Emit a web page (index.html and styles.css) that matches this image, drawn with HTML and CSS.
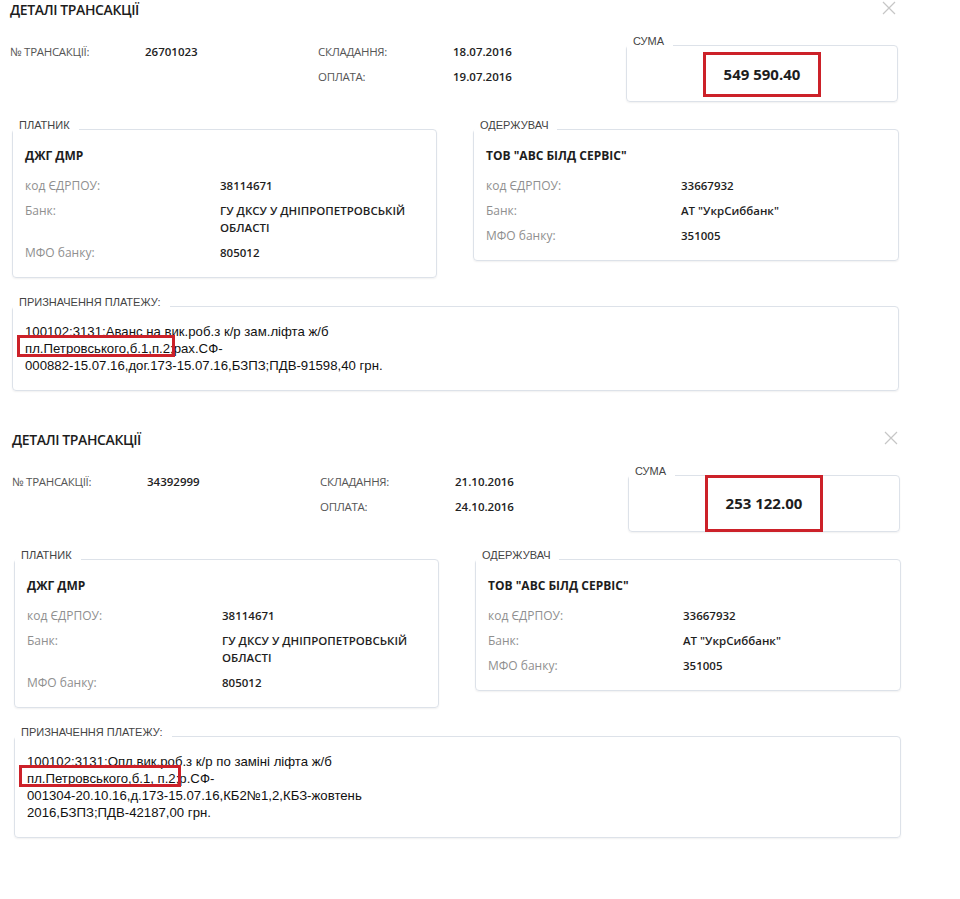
FILE: index.html
```html
<html>
<head>
    <title>Деталі трансакції</title>
    <meta charset="utf-8">
    <link rel="stylesheet" href="styles.css">
</head>
<body>

<div class="trx">
    <div class="trx-head">
        <h2 class="trx-title">ДЕТАЛІ ТРАНСАКЦІЇ</h2>
        <span class="trx-close"><svg width="14" height="14" viewBox="0 0 14 14"><path d="M1 1L13 13M13 1L1 13" stroke="#c6c6c6" stroke-width="1.2" fill="none"/></svg></span>
    </div>
    <div class="trx-top">
        <div class="trx-info">
            <span class="info-label">№ ТРАНСАКЦІЇ:</span>
            <span class="info-value">26701023</span>
            <span class="info-label">СКЛАДАННЯ:</span>
            <span class="info-value">18.07.2016</span>
            <span class="info-label info-skip">ОПЛАТА:</span>
            <span class="info-value">19.07.2016</span>
        </div>
        <fieldset class="box box-sum">
            <legend>СУМА</legend>
            <div class="sum-body"><span class="amount-mark">549 590.40</span></div>
        </fieldset>
    </div>
    <div class="trx-parties">
        <fieldset class="box">
            <legend>ПЛАТНИК</legend>
            <div class="party">
                <div class="party-name">ДЖГ ДМР</div>
                <div class="party-row"><span class="party-label">код ЄДРПОУ:</span><span class="party-value">38114671</span></div>
                <div class="party-row"><span class="party-label">Банк:</span><span class="party-value">ГУ ДКСУ У ДНІПРОПЕТРОВСЬКІЙ ОБЛАСТІ</span></div>
                <div class="party-row"><span class="party-label">МФО банку:</span><span class="party-value">805012</span></div>
            </div>
        </fieldset>
        <fieldset class="box">
            <legend>ОДЕРЖУВАЧ</legend>
            <div class="party">
                <div class="party-name">ТОВ "АВС БІЛД СЕРВІС"</div>
                <div class="party-row"><span class="party-label">код ЄДРПОУ:</span><span class="party-value">33667932</span></div>
                <div class="party-row"><span class="party-label">Банк:</span><span class="party-value">АТ "УкрСиббанк"</span></div>
                <div class="party-row"><span class="party-label">МФО банку:</span><span class="party-value">351005</span></div>
            </div>
        </fieldset>
    </div>
    <fieldset class="box box-purpose">
        <legend>ПРИЗНАЧЕННЯ ПЛАТЕЖУ:</legend>
        <div class="purpose">100102;3131;Аванс на вик.роб.з к/р зам.ліфта ж/б<br><span class="text-mark">пл.Петровського,б.1,п.2</span>;рах.СФ-<br>000882-15.07.16,дог.173-15.07.16,БЗПЗ;ПДВ-91598,40 грн.</div>
    </fieldset>
</div>

<div class="trx">
    <div class="trx-head">
        <h2 class="trx-title">ДЕТАЛІ ТРАНСАКЦІЇ</h2>
        <span class="trx-close"><svg width="14" height="14" viewBox="0 0 14 14"><path d="M1 1L13 13M13 1L1 13" stroke="#c6c6c6" stroke-width="1.2" fill="none"/></svg></span>
    </div>
    <div class="trx-top">
        <div class="trx-info">
            <span class="info-label">№ ТРАНСАКЦІЇ:</span>
            <span class="info-value">34392999</span>
            <span class="info-label">СКЛАДАННЯ:</span>
            <span class="info-value">21.10.2016</span>
            <span class="info-label info-skip">ОПЛАТА:</span>
            <span class="info-value">24.10.2016</span>
        </div>
        <fieldset class="box box-sum">
            <legend>СУМА</legend>
            <div class="sum-body"><span class="amount-mark amount-mark-tall">253 122.00</span></div>
        </fieldset>
    </div>
    <div class="trx-parties">
        <fieldset class="box">
            <legend>ПЛАТНИК</legend>
            <div class="party">
                <div class="party-name">ДЖГ ДМР</div>
                <div class="party-row"><span class="party-label">код ЄДРПОУ:</span><span class="party-value">38114671</span></div>
                <div class="party-row"><span class="party-label">Банк:</span><span class="party-value">ГУ ДКСУ У ДНІПРОПЕТРОВСЬКІЙ ОБЛАСТІ</span></div>
                <div class="party-row"><span class="party-label">МФО банку:</span><span class="party-value">805012</span></div>
            </div>
        </fieldset>
        <fieldset class="box">
            <legend>ОДЕРЖУВАЧ</legend>
            <div class="party">
                <div class="party-name">ТОВ "АВС БІЛД СЕРВІС"</div>
                <div class="party-row"><span class="party-label">код ЄДРПОУ:</span><span class="party-value">33667932</span></div>
                <div class="party-row"><span class="party-label">Банк:</span><span class="party-value">АТ "УкрСиббанк"</span></div>
                <div class="party-row"><span class="party-label">МФО банку:</span><span class="party-value">351005</span></div>
            </div>
        </fieldset>
    </div>
    <fieldset class="box box-purpose">
        <legend>ПРИЗНАЧЕННЯ ПЛАТЕЖУ:</legend>
        <div class="purpose">100102;3131;Опл.вик.роб.з к/р по заміні ліфта ж/б<br><span class="text-mark">пл.Петровського,б.1, п.2</span>;р.СФ-<br>001304-20.10.16,д.173-15.07.16,КБ2№1,2,КБЗ-жовтень<br>2016,БЗПЗ;ПДВ-42187,00 грн.</div>
    </fieldset>
</div>

</body>
</html>
```

FILE: styles.css
```css
body {
    margin: 0;
    font-family: "Open Sans", "Noto Sans", sans-serif;
    color: #222;
    background: #fff;
}

.trx {
    width: 890px;
    margin-left: 10px;
}

.trx + .trx {
    margin: 39px 0 0 12px;
}

.trx-head {
    display: flex;
    justify-content: space-between;
    align-items: flex-start;
}

.trx-title {
    margin: 0;
    font-size: 14px;
    font-weight: 600;
    line-height: 20px;
    letter-spacing: -0.4px;
    color: #1d1d1d;
}

.trx-close {
    display: flex;
    margin: 1px 4px 0 0;
}

.trx-top {
    display: flex;
    align-items: flex-start;
    margin-top: 15px;
}

.trx-info {
    display: grid;
    grid-template-columns: 135px 173px 135px 110px;
    padding-top: 4px;
}

.info-label {
    font-size: 11.5px;
    line-height: 25px;
    letter-spacing: -0.3px;
    color: #555;
}

.info-value {
    font-size: 11.5px;
    font-weight: 600;
    line-height: 25px;
    color: #222;
}

.info-skip {
    grid-column: 3;
}

/* fieldset boxes */
.box {
    margin: 0;
    padding: 0;
    min-width: 0;
    border: 1px solid #dde2e9;
    border-radius: 4px;
    box-shadow: 0 1px 2px rgba(0, 0, 0, 0.06);
}

.box legend {
    font-family: "Liberation Sans", Arial, sans-serif;
    font-size: 11px;
    line-height: 13px;
    color: #444;
    padding: 0 9px 7px 6px;
}

.box-sum {
    box-sizing: border-box;
    width: 272px;
    margin: 0 2px 0 auto;
}

.sum-body {
    display: flex;
    justify-content: center;
    align-items: flex-start;
    height: 46px;
}

.amount-mark {
    border: 3px solid #cc2129;
    padding: 0 18px;
    margin-top: -3px;
    font-size: 15px;
    font-weight: 700;
    line-height: 39px;
    color: #1d1d1d;
}

.amount-mark-tall {
    margin-top: -10px;
    line-height: 51px;
}

.trx-parties {
    display: grid;
    grid-template-columns: 425px 426px;
    column-gap: 36px;
    align-items: start;
    margin: 17px 0 0 2px;
}

.party {
    display: flex;
    flex-direction: column;
    gap: 8px;
    padding: 8px 12px 16px;
}

.party-name {
    font-size: 12px;
    font-weight: 700;
    line-height: 17px;
    color: #1d1d1d;
    margin-bottom: 5px;
}

.party-row {
    display: grid;
    grid-template-columns: 195px 1fr;
    font-size: 12px;
    line-height: 17px;
}

.party-label {
    color: #8f8f8f;
}

.party-value {
    font-size: 11.5px;
    font-weight: 600;
    color: #1e1e1e;
}

.box-purpose {
    width: 887px;
    box-sizing: border-box;
    margin: 18px 0 0 2px;
}

.purpose {
    padding: 7px 12px 16px;
    font-family: "Liberation Sans", Arial, sans-serif;
    font-size: 13.2px;
    line-height: 17px;
    color: #111;
}

.text-mark {
    position: relative;
    white-space: nowrap;
}

.text-mark::after {
    content: "";
    position: absolute;
    top: -6px;
    bottom: -1px;
    left: -8px;
    right: -5px;
    border: 3px solid #cc2129;
}
```
